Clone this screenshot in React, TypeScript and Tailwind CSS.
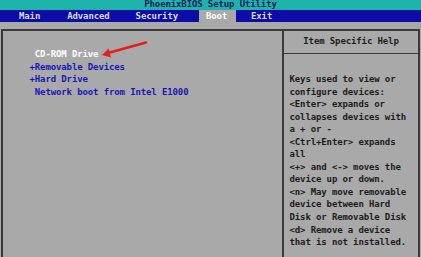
const MENU = [
  { label: "Main", ml: "ml-[19px]", active: false },
  { label: "Advanced", ml: "ml-[27px]", active: false },
  { label: "Security", ml: "ml-[26px]", active: false },
  { label: "Boot", ml: "ml-[21px]", active: true },
  { label: "Exit", ml: "ml-[15px]", active: false },
];

const BOOT_ITEMS = [
  { text: " CD-ROM Drive", selected: true },
  { text: "+Removable Devices", selected: false },
  { text: "+Hard Drive", selected: false },
  { text: " Network boot from Intel E1000", selected: false },
];

const HELP = [
  "Keys used to view or",
  "configure devices:",
  "<Enter> expands or",
  "collapses devices with",
  "a + or -",
  "<Ctrl+Enter> expands",
  "all",
  "<+> and <-> moves the",
  "device up or down.",
  "<n> May move removable",
  "device between Hard",
  "Disk or Removable Disk",
  "<d> Remove a device",
  "that is not installed.",
];

function Arrow() {
  return (
    <svg className="absolute left-0 top-0 pointer-events-none" width="421" height="257">
      <line x1="146" y1="42.5" x2="108" y2="53" stroke="#e3211b" strokeWidth="2.6" strokeLinecap="round" />
      <polygon points="102,55 111,57.5 108.5,48.5" fill="#e3211b" />
    </svg>
  );
}

export default function App() {
  return (
    <div className="relative w-[421px] h-[257px] overflow-hidden bg-[#a9a9a9] font-['DejaVu_Sans_Mono',monospace] text-[9px] font-bold tracking-[-0.12px]">
      <div className="h-[10px] bg-[#1db3ab] text-center leading-[9px] text-[#10205a]">
        PhoenixBIOS Setup Utility
      </div>
      <div className="flex h-[12px] bg-[#0c0ca6] leading-[12px] text-[#d8d8e0]">
        {MENU.map((m) => (
          <span
            key={m.label}
            className={
              m.active
                ? `${m.ml} w-[37px] pl-[7px] bg-[#a9a9a9] text-white`
                : m.ml
            }
          >
            {m.label}
          </span>
        ))}
      </div>
      <div className="mt-[7px] ml-[1px] flex w-[419px] h-[240px] border-l-2 border-t-2 border-r-2 border-[#3a3a3a]">
        <div className="w-[279px] pt-[17px] pl-[26.5px] leading-[12.5px] whitespace-pre">
          {BOOT_ITEMS.map((it) => (
            <div key={it.text} className={it.selected ? "text-white" : "text-[#1818b4]"}>
              {it.text}
            </div>
          ))}
        </div>
        <div className="flex-1 border-l-2 border-[#3a3a3a] text-[#1c1c1c]">
          <div className="flex h-[23px] items-center justify-center border-b border-[#3a3a3a]">
            Item Specific Help
          </div>
          <div className="pt-[19px] pl-[5.5px] leading-[12.55px] whitespace-pre">
            {HELP.map((l) => (
              <div key={l}>{l}</div>
            ))}
          </div>
        </div>
      </div>
      <Arrow />
    </div>
  );
}
